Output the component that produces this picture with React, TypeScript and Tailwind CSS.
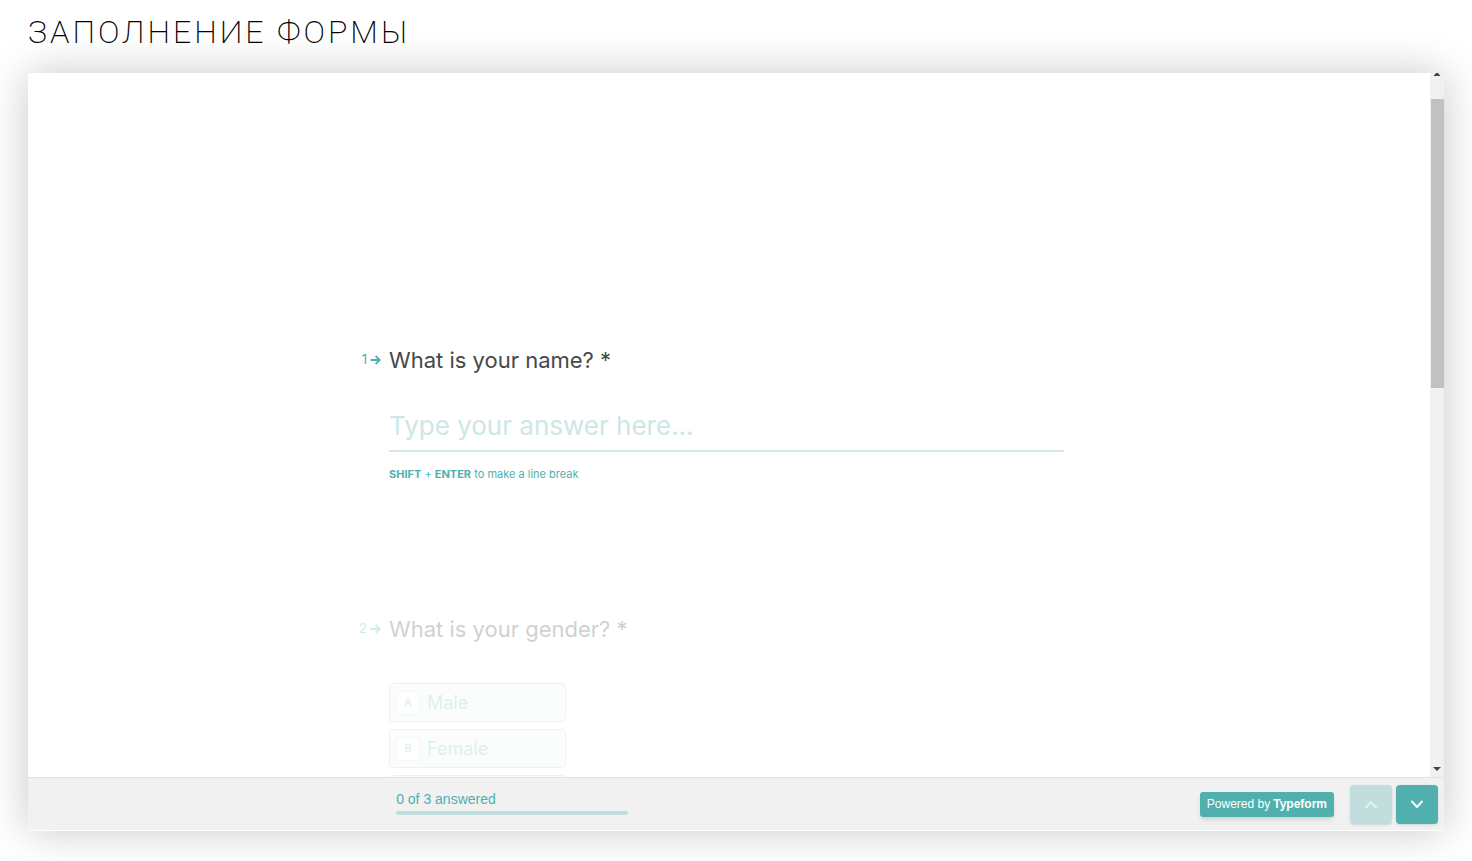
import { useState } from "react";
import type { ReactNode } from "react";

function QuestionArrow() {
  return (
    <svg viewBox="0 0 11 10" className="h-[10px] w-[11px]" fill="none" stroke="currentColor" strokeWidth="1.8" aria-hidden="true">
      <path d="M0.5 5H9.5M5.6 1L9.7 5L5.6 9" />
    </svg>
  );
}

function Chevron({ down = false }: { down?: boolean }) {
  return (
    <svg viewBox="0 0 14 9" className="h-[9px] w-[14px]" fill="none" stroke="currentColor" strokeWidth="2" aria-hidden="true">
      <path d={down ? "M1.5 1L7 7L12.5 1" : "M1.5 8L7 2L12.5 8"} />
    </svg>
  );
}

function Question({ number, title, children }: { number: number; title: ReactNode; children: ReactNode }) {
  return (
    <div className="flex gap-2">
      <div className="flex h-8 w-[25px] shrink-0 items-center justify-end gap-[3px] text-[13px] text-[#4fb0ae]">
        <span>{number}</span>
        <QuestionArrow />
      </div>
      <div className="min-w-0 flex-1">
        {title}
        {children}
      </div>
    </div>
  );
}

function Choice({ letter, label }: { letter: string; label: string }) {
  return (
    <button type="button" className="flex h-[39px] w-[177px] shrink-0 items-center gap-[7px] rounded border border-[#a5d6d4] bg-[#f1fafa] px-[6px] text-left text-lg text-[#79c4c2]">
      <span className="flex size-6 items-center justify-center rounded-sm border border-[#c9e5e4] bg-white text-[11px] font-medium">{letter}</span>
      {label}
    </button>
  );
}

function Scrollbar() {
  return (
    <div className="flex w-[14px] shrink-0 flex-col items-center bg-[#f1f1f1] text-[#454545]" aria-hidden="true">
      <svg viewBox="0 0 8 4" className="h-1 w-2 shrink-0" fill="currentColor">
        <path d="M0.5 3L3 0H5L7.5 3Z" />
      </svg>
      <div className="mt-[22px] h-[41%] w-[13px] self-end bg-[#c1c1c1]" />
      <svg viewBox="0 0 8 4" className="mt-auto mb-[6px] h-1 w-2 shrink-0" fill="currentColor">
        <path d="M0 0H8L4 4Z" />
      </svg>
    </div>
  );
}

export default function App() {
  const [name, setName] = useState("");

  return (
    <div className="flex h-screen flex-col overflow-hidden bg-white px-7 pb-[30px] font-['Inter',sans-serif]">
      <h1 className="flex h-[73px] shrink-0 items-start pt-3 font-['Roboto',sans-serif] text-[32px] leading-10 font-extralight tracking-[3px] text-black">
        ЗАПОЛНЕНИЕ ФОРМЫ
      </h1>

      <main className="flex min-h-0 flex-1 flex-col border-b border-white bg-white shadow-[0_0_40px_rgba(0,0,0,0.22)]">
        <div className="flex min-h-0 flex-1">
          <form className="min-w-0 flex-1 overflow-hidden pt-[271px]" onSubmit={(e) => e.preventDefault()}>
            <div className="mx-auto w-full max-w-[746px] pr-[38px]">
              <Question
                number={1}
                title={
                  <label htmlFor="name" className="block text-[22px] leading-8 text-[#484848]">
                    What is your name? *
                  </label>
                }
              >
                <input
                  id="name"
                  type="text"
                  value={name}
                  onChange={(e) => setName(e.target.value)}
                  placeholder="Type your answer here..."
                  className="mt-[26px] block h-[50px] w-full border-b-2 border-[#d5ebea] bg-transparent pb-[2px] text-[26px] text-[#4fb0ae] outline-none placeholder:text-[#cde7e6]"
                />
                <p className="mt-[14px] text-[11px] leading-4 text-[#4fb0ae]">
                  <b>SHIFT</b> + <b>ENTER</b> to make a line break
                </p>
              </Question>

              <div className="mt-[131px] opacity-25">
                <Question number={2} title={<h2 className="text-[22px] leading-8 text-[#484848]">What is your gender? *</h2>}>
                  <div className="mt-[38px] flex flex-col gap-[7px]">
                    <Choice letter="A" label="Male" />
                    <Choice letter="B" label="Female" />
                    <div className="h-[39px] w-[177px] rounded border border-[#a5d6d4] bg-[#f1fafa]" />
                  </div>
                </Question>
              </div>
            </div>
          </form>
          <Scrollbar />
        </div>

        <footer className="flex h-[53px] shrink-0 items-center border-t border-[#e2e2e2] bg-[#f1f1f1] pr-[6px] pl-[26%] font-['Liberation_Sans',Arial,sans-serif]">
          <div className="mr-auto w-[232px] pb-1">
            <p className="text-sm leading-5 text-[#4fb0ae]">0 of 3 answered</p>
            <div className="mt-[2px] h-1 rounded-sm bg-[#c1dddd]" />
          </div>
          <a href="#typeform" className="flex h-[25px] shrink-0 items-center gap-[3px] rounded-[3px] bg-[#4fb0ae] px-[7px] text-xs text-white shadow-md">
            Powered by <b>Typeform</b>
          </a>
          <div className="ml-4 flex shrink-0 gap-1">
            <button type="button" aria-label="Previous question" className="flex h-[39px] w-[42px] items-center justify-center rounded bg-[#c1dddd] text-[#e4f1f1] shadow-sm">
              <Chevron />
            </button>
            <button type="button" aria-label="Next question" className="flex h-[39px] w-[42px] items-center justify-center rounded bg-[#4fb0ae] text-white shadow-sm">
              <Chevron down />
            </button>
          </div>
        </footer>
      </main>
    </div>
  );
}
